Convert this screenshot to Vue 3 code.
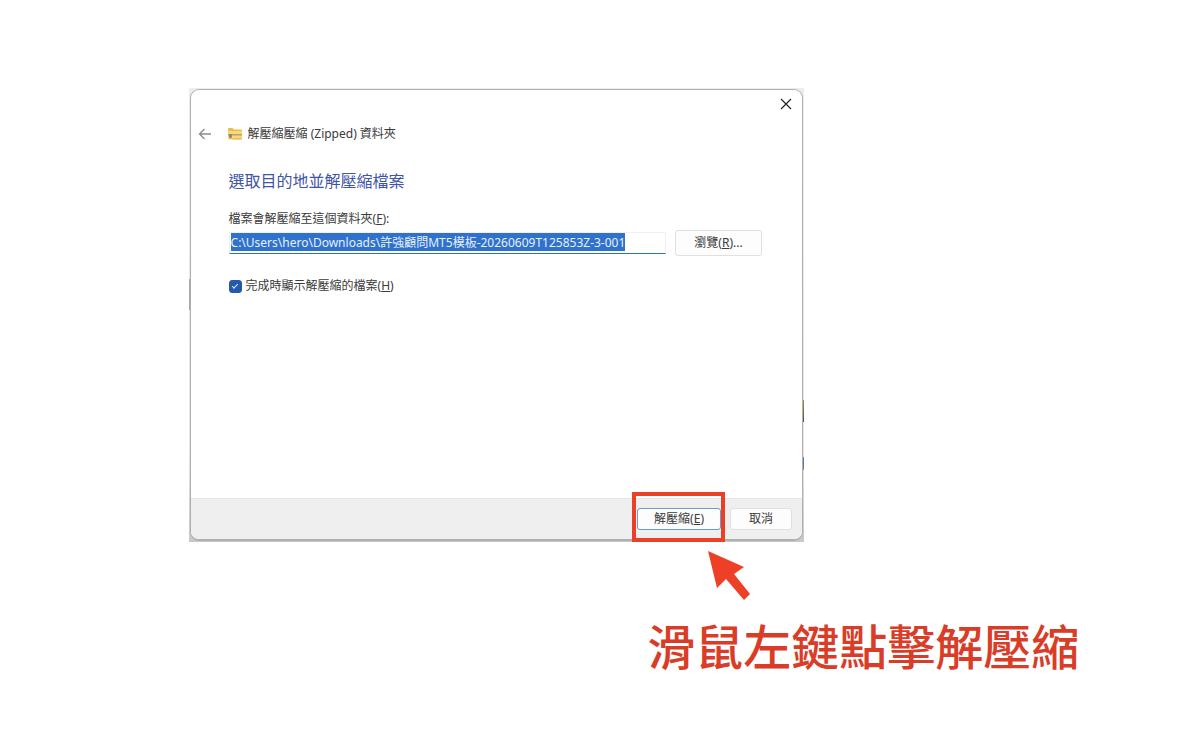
<script setup>
import { onMounted, ref } from 'vue'

const path = ref('C:\\Users\\hero\\Downloads\\許強顧問MT5模板-20260609T125853Z-3-001')
const showFiles = ref(true)
const pathInput = ref(null)

onMounted(() => {
  pathInput.value.focus()
  pathInput.value.select()
})
</script>

<template>
  <main class="page">
    <div class="backdrop">
      <section class="dialog" aria-labelledby="wizard-title">
        <div class="topbar">
          <button class="icon-button" type="button" aria-label="關閉">
            <svg width="12" height="12" viewBox="0 0 12 12" fill="none" stroke="#222" stroke-width="1.2">
              <path d="M1 1 11 11M11 1 1 11" />
            </svg>
          </button>
        </div>
        <header class="header">
          <button class="icon-button" type="button" aria-label="返回">
            <svg width="14" height="12" viewBox="0 0 14 12" fill="none" stroke="#8a8a8a" stroke-width="1.3">
              <path d="M13 6H1.500M6.500 1 1.500 6l5 5" />
            </svg>
          </button>
          <svg class="folder" width="16" height="14" viewBox="0 0 16 14">
            <path d="M1 2Q1 1 2 1H5.500L7 2.500H14Q15 2.500 15 3.500V6H1Z" fill="#ecbc4e" />
            <path d="M1 4H15V11.500Q15 12.500 14 12.500H2Q1 12.500 1 11.500Z" fill="#f9d877" />
            <path d="M1 7H15V8.500H1Z" fill="#b3a57c" />
            <path d="M2 7H5V10L3.500 12 2 10Z" fill="#8d8a80" />
            <path d="M6 11H15V11.500Q15 12.500 14 12.500H5Z" fill="#e8c05a" />
          </svg>
          <span>解壓縮壓縮 (Zipped) 資料夾</span>
        </header>
        <form class="content" @submit.prevent>
          <h1 id="wizard-title">選取目的地並解壓縮檔案</h1>
          <label class="path-label" for="path">檔案會解壓縮至這個資料夾(<u>F</u>):</label>
          <div class="path-row">
            <input id="path" ref="pathInput" v-model="path" class="path" type="text" spellcheck="false" />
            <button class="button browse" type="button">瀏覽(<u>R</u>)...</button>
          </div>
          <label class="check" for="show">
            <input id="show" v-model="showFiles" type="checkbox" />
            <span>完成時顯示解壓縮的檔案(<u>H</u>)</span>
          </label>
        </form>
        <footer class="footer">
          <div class="target">
            <button class="button primary" type="button">解壓縮(<u>E</u>)</button>
            <span class="highlight"></span>
            <svg class="arrow" width="44" height="52" viewBox="0 0 44 52">
              <path d="M1 1 37 17 27 24 43 44 37 50 19 29 10 38Z" fill="#ee4026" />
            </svg>
          </div>
          <button class="button cancel" type="button">取消</button>
        </footer>
      </section>
    </div>
    <p class="caption">滑鼠左鍵點擊解壓縮</p>
  </main>
</template>

<style>
body {
  margin: 0;
  background: #fff;
}
</style>

<style scoped>
.page {
  box-sizing: border-box;
  min-height: 100vh;
  padding: 88px 9% 0 15.9%;
  font: 12px/16px "Noto Sans", "Noto Sans CJK TC", sans-serif;
  color: #3a3a3a;
}
.backdrop {
  width: 69.1%;
  box-sizing: border-box;
  padding: 1px;
  background:
    linear-gradient(#a8a8a8, #a8a8a8) 0 191px / 1px 31px no-repeat,
    linear-gradient(#b08a55, #5f4a3c) 100% 312px / 1px 22px no-repeat,
    linear-gradient(#888, #3e74b0, #888) 100% 369px / 1px 13px no-repeat,
    linear-gradient(#ededed, #e6e6e6 80%, #c8c8c8);
}
.dialog {
  display: flex;
  flex-direction: column;
  box-sizing: border-box;
  min-height: 452px;
  border: 1px solid #b0b0b0;
  border-bottom-width: 2px;
  border-radius: 9px;
  background: #fff;
}
.topbar {
  display: flex;
  justify-content: flex-end;
  padding: 8px 10px 0;
}
.icon-button {
  display: flex;
  padding: 0;
  border: 0;
  background: none;
}
.header {
  display: flex;
  align-items: center;
  padding: 16px 7px 0;
}
.folder {
  margin: 0 5px 0 15px;
}
.content {
  flex: 1;
  padding: 0 40px 0 38px;
}
h1 {
  margin: 27px 0 18px;
  font-size: 16px;
  line-height: 24px;
  font-weight: 400;
  color: #3f55a6;
}
.path-label {
  display: block;
}
.path-row {
  display: flex;
  align-items: center;
  gap: 9px;
  margin-top: 3px;
}
.path {
  box-sizing: border-box;
  flex: 1;
  min-width: 0;
  height: 22px;
  padding: 0 1px 3px;
  border: 1px solid #f0f0f0;
  border-bottom: 1px solid #2f74b8;
  background: #fff;
  font: inherit;
  color: #333;
  outline: 0;
}
.path::selection {
  background: #3072cb;
  color: #e6f0ff;
}
.button {
  box-sizing: border-box;
  padding: 0;
  border: 1px solid #e0e0e0;
  border-radius: 3px;
  background: #fdfdfd;
  font: inherit;
  color: #3a3a3a;
}
.browse {
  width: 87px;
  height: 26px;
}
.check {
  display: flex;
  align-items: center;
  gap: 4px;
  margin-top: 22px;
}
.check input {
  appearance: none;
  width: 13px;
  height: 13px;
  margin: 0;
  border-radius: 3px;
  background: #fff;
  border: 1px solid #777;
  display: grid;
  place-items: center;
}
.check input:checked {
  background: #2459ab;
  border-color: #2459ab;
}
.check input:checked::before {
  content: "";
  width: 5px;
  height: 2px;
  margin-bottom: 2px;
  border: solid #e4edfa;
  border-width: 0 0 1px 1px;
  transform: rotate(-45deg);
}
.footer {
  display: flex;
  justify-content: flex-end;
  gap: 9px;
  padding: 9px 10px;
  border-top: 1px solid #e5e5e5;
  border-radius: 0 0 8px 8px;
  background: #efefef;
}
.target {
  position: relative;
  display: flex;
}
.primary {
  width: 84px;
  height: 22px;
  border-color: #6b9bd0;
}
.cancel {
  width: 62px;
  height: 22px;
}
.highlight {
  position: absolute;
  inset: -16px -4px -12px -5px;
  border: 4px solid #ea4025;
}
.arrow {
  position: absolute;
  top: 42px;
  left: 70px;
}
.caption {
  margin: 73px 0 0;
  text-align: right;
  font-size: 48px;
  line-height: 64px;
  font-weight: 500;
  color: #d93d28;
}
</style>
